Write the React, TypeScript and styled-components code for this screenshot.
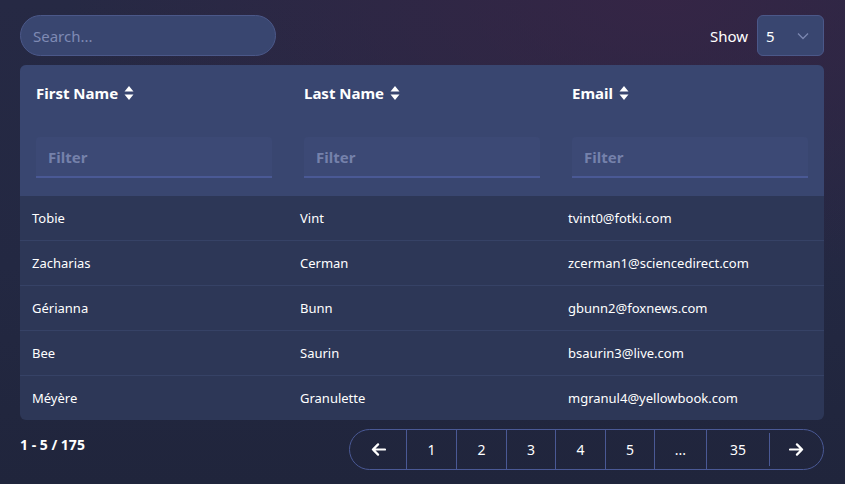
import styled, { createGlobalStyle } from 'styled-components'

const GlobalStyle = createGlobalStyle`
  html, body {
    margin: 0;
    padding: 0;
  }
  body {
    font-family: 'Noto Sans', 'Open Sans', sans-serif;
    color: #fff;
  }
  * { box-sizing: border-box; }
`

const Page = styled.div`
  width: 845px;
  height: 484px;
  padding: 15px 21px 0 20px;
  background:
    radial-gradient(ellipse 70% 60% at 78% 0%, rgba(58, 36, 70, 0.75), rgba(58, 36, 70, 0) 100%),
    linear-gradient(180deg, #262944 0%, #232842 55%, #20253c 100%);
  overflow: hidden;
`

const Toolbar = styled.div`
  display: flex;
  justify-content: space-between;
  align-items: center;
  height: 41px;
  margin-bottom: 9px;
`

const Search = styled.input`
  width: 256px;
  height: 41px;
  padding: 0 12px;
  border-radius: 21px;
  border: 1px solid #4b5889;
  background: #394670;
  color: #fff;
  font-family: inherit;
  font-size: 15px;
  outline: none;
  &::placeholder { color: #7f8ab4; }
`

const ShowBox = styled.div`
  display: flex;
  align-items: center;
  gap: 9px;
  font-size: 15px;
`

const Select = styled.div`
  width: 67px;
  height: 41px;
  display: flex;
  align-items: center;
  justify-content: space-between;
  padding: 0 14px 0 8px;
  border-radius: 6px;
  border: 1px solid #4b5889;
  background: #394670;
  font-size: 15px;
`

const Card = styled.div`
  border-radius: 6px;
  overflow: hidden;
  background: #2d3757;
`

const Head = styled.div`
  background: #394670;
  display: grid;
  grid-template-columns: repeat(3, 268px);
  padding: 0 0 18px 16px;
`

const HeadCell = styled.div`
  display: flex;
  flex-direction: column;
`

const Title = styled.div`
  display: flex;
  align-items: center;
  gap: 6px;
  height: 56px;
  font-size: 15px;
  font-weight: 700;
`

const Filter = styled.input`
  margin-top: 16px;
  width: 236px;
  height: 41px;
  padding: 0 12px;
  border: none;
  border-bottom: 2px solid #4a5995;
  border-radius: 4px 4px 0 0;
  background: #3c4975;
  color: #fff;
  font-family: inherit;
  font-size: 15px;
  font-weight: 700;
  outline: none;
  &::placeholder { color: #7581ab; }
`

const Row = styled.div<{ $last?: boolean }>`
  display: grid;
  grid-template-columns: repeat(3, 268px);
  align-items: center;
  height: ${(p) => (p.$last ? '44px' : '45px')};
  padding-left: 12px;
  border-bottom: ${(p) => (p.$last ? 'none' : '1px solid #364266')};
  font-size: 13px;
`

const Footer = styled.div`
  display: flex;
  justify-content: space-between;
  align-items: flex-start;
  margin-top: 9px;
`

const Count = styled.div`
  padding-top: 6px;
  font-size: 14px;
  font-weight: 700;
`

const Pager = styled.div`
  display: flex;
  height: 41px;
  border: 1px solid #4a5995;
  border-radius: 21px;
  overflow: hidden;
`

const PageBtn = styled.div<{ $w: number; $divider?: 'full' | 'short' }>`
  position: relative;
  width: ${(p) => p.$w}px;
  display: flex;
  align-items: center;
  justify-content: center;
  font-size: 14px;
  border-left: ${(p) => (p.$divider === 'full' ? '1px solid #4a5995' : 'none')};
  &::before {
    content: '';
    display: ${(p) => (p.$divider === 'short' ? 'block' : 'none')};
    position: absolute;
    left: 0;
    top: 3px;
    bottom: 3px;
    width: 1px;
    background: #4a5995;
  }
`

const SortIcon = () => (
  <svg width="10" height="16" viewBox="0 0 10 16">
    <path d="M5 1 L9.5 6.5 H0.5 Z" fill="#fff" />
    <path d="M5 15 L9.5 9.5 H0.5 Z" fill="#fff" />
  </svg>
)

const Chevron = () => (
  <svg width="12" height="8" viewBox="0 0 12 8">
    <path d="M1 1.5 L6 6.5 L11 1.5" fill="none" stroke="#7b86b0" strokeWidth="1.3" />
  </svg>
)

const Arrow = ({ dir }: { dir: 'left' | 'right' }) => (
  <svg width="15" height="13" viewBox="0 0 16 14" style={{ transform: dir === 'left' ? 'scaleX(-1)' : undefined }}>
    <path d="M1 7 H14 M8.5 1.5 L14 7 L8.5 12.5" fill="none" stroke="#fff" strokeWidth="2.4" strokeLinecap="round" strokeLinejoin="round" />
  </svg>
)

const rows = [
  ['Tobie', 'Vint', 'tvint0@fotki.com'],
  ['Zacharias', 'Cerman', 'zcerman1@sciencedirect.com'],
  ['Gérianna', 'Bunn', 'gbunn2@foxnews.com'],
  ['Bee', 'Saurin', 'bsaurin3@live.com'],
  ['Méyère', 'Granulette', 'mgranul4@yellowbook.com'],
]

const columns = ['First Name', 'Last Name', 'Email']

const pages: { label: string; w: number }[] = [
  { label: '1', w: 50 },
  { label: '2', w: 50 },
  { label: '3', w: 49 },
  { label: '4', w: 50 },
  { label: '5', w: 49 },
  { label: '...', w: 52 },
  { label: '35', w: 63 },
]

const App = () => {
  return (
    <Page>
      <GlobalStyle />
      <Toolbar>
        <Search placeholder="Search..." />
        <ShowBox>
          Show
          <Select>
            <span>5</span>
            <Chevron />
          </Select>
        </ShowBox>
      </Toolbar>
      <Card>
        <Head>
          {columns.map((c) => (
            <HeadCell key={c}>
              <Title>
                {c} <SortIcon />
              </Title>
              <Filter placeholder="Filter" />
            </HeadCell>
          ))}
        </Head>
        {rows.map((r, i) => (
          <Row key={r[2]} $last={i === rows.length - 1}>
            {r.map((v) => (
              <div key={v}>{v}</div>
            ))}
          </Row>
        ))}
      </Card>
      <Footer>
        <Count>1 - 5 / 175</Count>
        <Pager>
          <PageBtn $w={56}>
            <Arrow dir="left" />
          </PageBtn>
          {pages.map((p) => (
            <PageBtn key={p.label} $w={p.w} $divider="full">
              {p.label}
            </PageBtn>
          ))}
          <PageBtn $w={54} $divider="short">
            <Arrow dir="right" />
          </PageBtn>
        </Pager>
      </Footer>
    </Page>
  )
}

export default App
